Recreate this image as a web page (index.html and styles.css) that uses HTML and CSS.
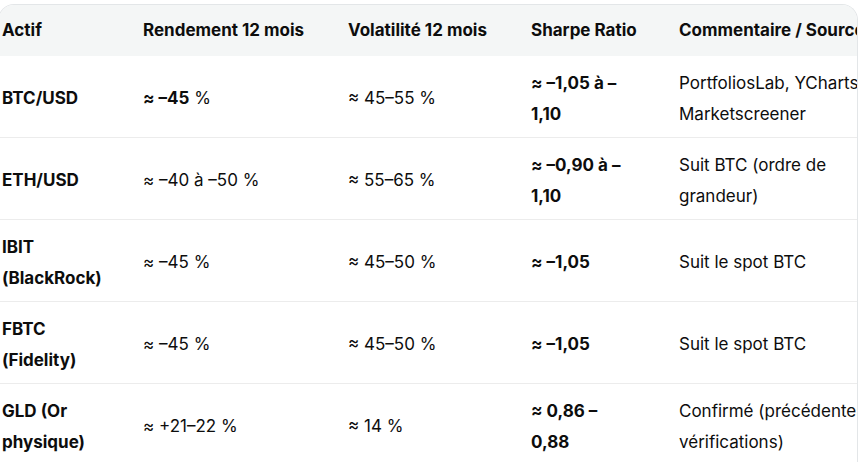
FILE: index.html
```html
<!DOCTYPE html>
<html lang="fr">
<head>
<meta charset="utf-8">
<title>Tableau</title>
<link rel="stylesheet" href="styles.css">
</head>
<body>
<div class="table-wrap">
  <table class="data">
    <thead>
      <tr>
        <th class="c1">Actif</th>
        <th class="c2">Rendement 12 mois</th>
        <th class="c3">Volatilité 12 mois</th>
        <th class="c4">Sharpe Ratio</th>
        <th class="c5">Commentaire / Source</th>
      </tr>
    </thead>
    <tbody>
      <tr>
        <td><strong>BTC/USD</strong></td>
        <td><strong>≈ –45</strong> %</td>
        <td>≈ 45–55 %</td>
        <td><strong>≈ –1,05 à –1,10</strong></td>
        <td>PortfoliosLab, YCharts, Marketscreener</td>
      </tr>
      <tr>
        <td><strong>ETH/USD</strong></td>
        <td>≈ –40 à –50 %</td>
        <td>≈ 55–65 %</td>
        <td><strong>≈ –0,90 à –1,10</strong></td>
        <td>Suit BTC (ordre de grandeur)</td>
      </tr>
      <tr>
        <td><strong>IBIT (BlackRock)</strong></td>
        <td>≈ –45 %</td>
        <td>≈ 45–50 %</td>
        <td><strong>≈ –1,05</strong></td>
        <td>Suit le spot BTC</td>
      </tr>
      <tr>
        <td><strong>FBTC (Fidelity)</strong></td>
        <td>≈ –45 %</td>
        <td>≈ 45–50 %</td>
        <td><strong>≈ –1,05</strong></td>
        <td>Suit le spot BTC</td>
      </tr>
      <tr>
        <td><strong>GLD (Or physique)</strong></td>
        <td>≈ +21–22 %</td>
        <td>≈ 14 %</td>
        <td><strong>≈ 0,86 – 0,88</strong></td>
        <td>Confirmé (précédentes vérifications)</td>
      </tr>
    </tbody>
  </table>
</div>
</body>
</html>
```

FILE: styles.css
```css
html, body {
  margin: 0;
  padding: 0;
  background: #ffffff;
}

body {
  font-family: Inter, "Noto Sans", "Liberation Sans", sans-serif;
  font-size: 17px;
  color: #0d0d0d;
  overflow: hidden;
}

.table-wrap {
  margin: 4px 0 0 -2px;
  width: 860px;
  box-sizing: border-box;
  border: 1px solid #e3e6e8;
  border-bottom: none;
  border-radius: 16px 16px 0 0;
  overflow: hidden;
}

.data {
  border-collapse: separate;
  border-spacing: 0;
  table-layout: fixed;
  width: 910px;
  line-height: 31px;
}

.data th,
.data td {
  box-sizing: border-box;
  text-align: left;
  vertical-align: middle;
  padding-left: 0;
}

.data th {
  background: #f4f6f6;
  font-weight: 700;
  padding-top: 10px;
  padding-bottom: 10px;
  white-space: nowrap;
}

.data td {
  padding-top: 11.5px;
  padding-bottom: 7.5px;
  border-bottom: 1px solid #ececec;
}

.data strong {
  font-weight: 700;
}

.data th:first-child,
.data td:first-child {
  padding-left: 3px;
}

.c1 { width: 144px; padding-right: 36px; }
.c2 { width: 205px; padding-right: 24px; }
.c3 { width: 183px; padding-right: 24px; }
.c4 { width: 148px; padding-right: 46px; }
.c5 { width: 230px; padding-right: 24px; }

.data td:nth-child(1) { padding-right: 36px; }
.data td:nth-child(2) { padding-right: 24px; }
.data td:nth-child(3) { padding-right: 24px; }
.data td:nth-child(4) { padding-right: 46px; }
.data td:nth-child(5) { padding-right: 24px; }
```
